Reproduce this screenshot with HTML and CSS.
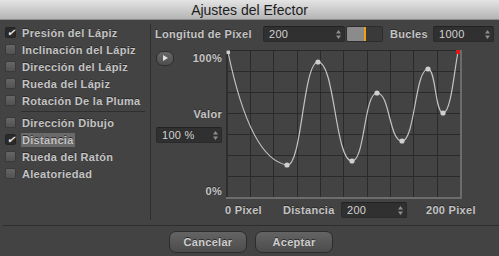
FILE: index.html
```html
<!DOCTYPE html>
<html lang="es">
<head>
    <meta charset="UTF-8">
    <title>Ajustes del Efector</title>
    <link rel="stylesheet" href="styles.css">
</head>
<body>
    <div class="window">
        <div class="titlebar">Ajustes del Efector</div>
        <div class="main">
            <div class="side">
                <div class="opt"><span class="check on">&#10004;</span><span class="txt">Presión del Lápiz</span></div>
                <div class="opt"><span class="check"></span><span class="txt">Inclinación del Lápiz</span></div>
                <div class="opt"><span class="check"></span><span class="txt">Dirección del Lápiz</span></div>
                <div class="opt"><span class="check"></span><span class="txt">Rueda del Lápiz</span></div>
                <div class="opt"><span class="check"></span><span class="txt">Rotación De la Pluma</span></div>
                <div class="sep"></div>
                <div class="opt"><span class="check"></span><span class="txt">Dirección Dibujo</span></div>
                <div class="opt"><span class="check on">&#10004;</span><span class="txt sel">Distancia</span></div>
                <div class="opt"><span class="check"></span><span class="txt">Rueda del Ratón</span></div>
                <div class="opt"><span class="check"></span><span class="txt">Aleatoriedad</span></div>
            </div>
            <div class="panel">
                <div class="toprow">
                    <span class="lbl len">Longitud de Píxel</span>
                    <span class="field w82">200<svg class="spin" width="5" height="9" viewBox="0 0 5 9"><path d="M2.5 0 5 3.5H0zM2.5 9 5 5.5H0z"/></svg></span>
                    <span class="swatch"></span>
                    <span class="lbl loops">Bucles</span>
                    <span class="field w61">1000<svg class="spin" width="5" height="9" viewBox="0 0 5 9"><path d="M2.5 0 5 3.5H0zM2.5 9 5 5.5H0z"/></svg></span>
                </div>
                <div class="graphrow">
                    <div class="axis">
                        <div class="axtop">
                            <span class="play"><svg width="5" height="6" viewBox="0 0 5 6"><path d="M0 0 5 3 0 6z"/></svg></span>
                            <span class="lbl">100%</span>
                        </div>
                        <span class="lbl valor">Valor</span>
                        <span class="field w66">100 %<svg class="spin" width="5" height="9" viewBox="0 0 5 9"><path d="M2.5 0 5 3.5H0zM2.5 9 5 5.5H0z"/></svg></span>
                        <span class="lbl zero">0%</span>
                    </div>
                    <svg class="graph" width="236" height="149" viewBox="0 0 236 149">
                        <g stroke="#2a2a2a" stroke-width="1">
                            <path d="M0.5 0V148M24.5 0V148M47.5 0V148M71.5 0V148M94.5 0V148M117.5 0V148M141.5 0V148M164.5 0V148M187.5 0V148M211.5 0V148"/>
                            <path d="M0 0.5H235M0 21.5H235M0 42.5H235M0 63.5H235M0 84.5H235M0 105.5H235M0 126.5H235"/>
                        </g>
                        <path d="M1 0V149" stroke="#2e2e2e" stroke-width="2"/>
                        <path d="M0 148H236M235 0V149" stroke="#6c6c6c" stroke-width="2" fill="none"/>
                        <path d="M2 2C12 50 30 110 61 115C76 117 77 12 92 12C109 12 109 111 126 111C139 111 138 43 151 43C164 43 163 91 176 91C189 91 189 19 202 19C210 19 209 63 217 63C225 63 228 22 232 2" fill="none" stroke="#c4c4c4" stroke-width="1.2"/>
                        <g fill="#cfcfcf">
                            <rect x="0.5" y="0.5" width="3.5" height="3.5"/>
                            <circle cx="61" cy="115" r="2.6"/>
                            <circle cx="92" cy="12" r="2.6"/>
                            <circle cx="126" cy="111" r="2.6"/>
                            <circle cx="151" cy="43" r="2.6"/>
                            <circle cx="176" cy="91" r="2.6"/>
                            <circle cx="202" cy="19" r="2.6"/>
                            <circle cx="217" cy="63" r="2.6"/>
                        </g>
                        <rect x="230" y="0" width="4" height="4" fill="#e01818"/>
                    </svg>
                </div>
                <div class="bottomrow">
                    <span class="lbl px0">0 Pixel</span>
                    <span class="lbl dist">Distancia</span>
                    <span class="field w66">200<svg class="spin" width="5" height="9" viewBox="0 0 5 9"><path d="M2.5 0 5 3.5H0zM2.5 9 5 5.5H0z"/></svg></span>
                    <span class="lbl px200">200 Pixel</span>
                </div>
            </div>
        </div>
        <div class="footer">
            <button class="btn">Cancelar</button>
            <button class="btn">Aceptar</button>
        </div>
    </div>
</body>
</html>
```

FILE: styles.css
```css
*{
    margin: 0;
    padding: 0;
    box-sizing: border-box;
}
body{
    width: 499px;
    height: 256px;
    overflow: hidden;
    background-color: #434343;
    font-family: "Liberation Sans", Arial, sans-serif;
}
.window{
    display: flex;
    flex-direction: column;
    height: 256px;
}
.titlebar{
    height: 20px;
    line-height: 20px;
    text-align: center;
    font-size: 14px;
    color: #1c1c1c;
    background: linear-gradient(#e4e4e4, #b4b4b4);
    border-bottom: 1px solid #8c8c8c;
}
.main{
    display: flex;
    height: 205px;
}
.side{
    width: 151px;
    margin: 4px 0 5px 0;
    border-right: 1px solid #2e2e2e;
}
.opt{
    display: flex;
    align-items: center;
    height: 17px;
    padding-left: 5px;
}
.check{
    width: 11px;
    height: 11px;
    margin-right: 6px;
    border-radius: 2px;
    background: linear-gradient(#666, #525252);
    border: 1px solid #3a3a3a;
    font-size: 10px;
    line-height: 10px;
    color: #e8e8e8;
    text-align: center;
    font-style: italic;
}
.check.on{
    background: #2a2a2a;
    border-color: #242424;
}
.txt, .lbl{
    font-size: 11px;
    font-weight: bold;
    letter-spacing: 0.3px;
    color: #c4c4c4;
    text-shadow: 0 -1px 0 #2a2a2a;
    white-space: nowrap;
}
.txt.sel{
    background: #6a6a6a;
    padding: 1px 1px;
    margin-left: -1px;
}
.sep{
    height: 1px;
    margin: 2px 5px 2px 21px;
    background: #2e2e2e;
}
.panel{
    flex: 1;
    padding: 6px 0 0 4px;
}
.toprow, .bottomrow{
    display: flex;
    align-items: center;
    height: 16px;
}
.len{
    width: 108px;
}
.loops{
    width: 43px;
    margin-left: 7px;
}
.field{
    display: flex;
    align-items: center;
    justify-content: space-between;
    height: 16px;
    padding: 0 3px 0 5px;
    background: #303030;
    border: 1px solid #2a2a2a;
    border-top-color: #222;
    border-radius: 2px;
    font-size: 11px;
    letter-spacing: 0.3px;
    color: #d2d2d2;
}
.spin{
    fill: #8e8e8e;
}
.w82{
    width: 82px;
}
.w61{
    width: 61px;
}
.w66{
    width: 66px;
}
.swatch{
    width: 37px;
    height: 16px;
    margin-left: 1px;
    border: 1px solid #2c2c2c;
    border-radius: 2px;
    background: linear-gradient(90deg, #8b8b8b 0, #8b8b8b 17px, #f0a018 17px, #f0a018 19px, #3a3a3a 19px);
}
.graphrow{
    display: flex;
    margin-top: 8px;
}
.axis{
    display: flex;
    flex-direction: column;
    align-items: flex-end;
    width: 66px;
    margin-right: 4px;
    margin-left: 1px;
}
.axtop{
    display: flex;
    justify-content: space-between;
    align-items: center;
    width: 100%;
    height: 16px;
}
.play{
    display: flex;
    align-items: center;
    justify-content: center;
    width: 18px;
    height: 15px;
    border-radius: 7px;
    background: linear-gradient(#676767, #4e4e4e);
    border: 1px solid #2e2e2e;
    fill: #e0e0e0;
}
.valor{
    margin-top: 41px;
    line-height: 14px;
}
.axis .field{
    margin-top: 6px;
}
.zero{
    margin-top: auto;
    line-height: 14px;
    margin-bottom: 1px;
}
.graph{
    display: block;
}
.bottomrow{
    margin-top: 3px;
}
.px0{
    width: 58px;
    margin-left: 70px;
}
.dist{
    width: 58px;
}
.px200{
    margin-left: 19px;
}
.footer{
    flex: 1;
    display: flex;
    justify-content: center;
    gap: 8px;
    padding-top: 5px;
    margin-left: 3px;
    border-top: 1px solid #2e2e2e;
}
.btn{
    width: 78px;
    height: 22px;
    border-radius: 7px;
    border: 1px solid #2c2c2c;
    background: linear-gradient(#646464, #4c4c4c);
    font-family: "Liberation Sans", Arial, sans-serif;
    font-size: 11px;
    font-weight: bold;
    letter-spacing: 0.3px;
    color: #cfcfcf;
    text-shadow: 0 -1px 0 #2a2a2a;
}
```
